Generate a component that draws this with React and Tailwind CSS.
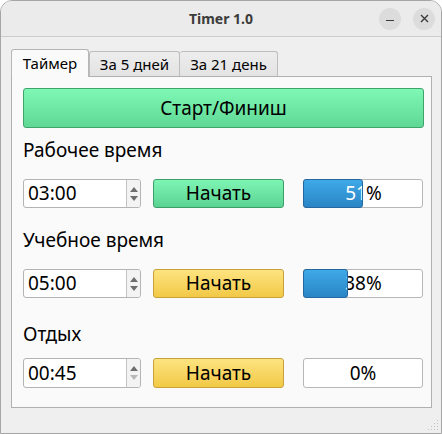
const font = { fontFamily: '"Noto Sans", "Open Sans", sans-serif' }

function SpinBox({ value, downDisabled }) {
  return (
    <div className="flex w-[118px] h-full bg-white border border-[#b4b4b4] rounded-[3px] overflow-hidden">
      <div className="flex-1 flex items-center pl-[4px] text-[19px] text-black">{value}</div>
      <div className="w-[14px] flex flex-col items-center justify-center gap-[4px] bg-[#f3f3f3] border-l border-[#c4c4c4]">
        <svg width="8" height="5" viewBox="0 0 8 5"><path d="M4 0L8 5H0Z" fill="#6e6e6e" /></svg>
        <svg width="8" height="5" viewBox="0 0 8 5"><path d="M0 0H8L4 5Z" fill={downDisabled ? "#b8b8b8" : "#6e6e6e"} /></svg>
      </div>
    </div>
  )
}

function StartButton({ color }) {
  const cls = color === "green"
    ? "bg-gradient-to-b from-[#7ff5b4] to-[#5ad392] border-[#3c9f69]"
    : "bg-gradient-to-b from-[#fde37f] to-[#f2c944] border-[#c8a13a]"
  return (
    <div className={`w-[131px] h-full flex items-center justify-center border rounded-[3px] text-[19px] text-black ${cls}`}>
      Начать
    </div>
  )
}

function Progress({ value }) {
  return (
    <div className="relative w-[120px] h-full bg-white border border-[#b7b7b7] rounded-[3px]">
      <div className="absolute inset-0 flex items-center justify-center text-[19px] text-black">{value}%</div>
      {value > 0 && (
        <div
          className="absolute left-[-1px] top-[-1px] bottom-[-1px] overflow-hidden rounded-[3px] border border-[#2567a0] bg-gradient-to-b from-[#3fa9e8] to-[#2a85c5]"
          style={{ width: `${value}%` }}
        >
          <div className="w-[120px] h-full flex items-center justify-center text-[19px] text-white">{value}%</div>
        </div>
      )}
    </div>
  )
}

function Row({ time, color, value, downDisabled, h }) {
  return (
    <div className={`flex items-stretch ${h}`}>
      <SpinBox value={time} downDisabled={downDisabled} />
      <div className="ml-[12px]"><StartButton color={color} /></div>
      <div className="ml-[19px]"><Progress value={value} /></div>
    </div>
  )
}

export default function App() {
  return (
    <div style={font} className="w-[442px] h-[434px] flex flex-col bg-[#efefef] border border-[#a6a6a6] rounded-t-[12px] overflow-hidden">
      {/* Title bar */}
      <div className="h-[36px] flex items-center bg-[#ebebeb] border-b border-[#cdcdcd] shrink-0">
        <div className="w-[62px]" />
        <div className="flex-1 text-center text-[14px] font-bold text-[#3c3c3c]">Timer 1.0</div>
        <div className="w-[62px] flex items-center justify-end gap-[12px] pr-[6px]">
          <div className="w-[22px] h-[22px] rounded-full bg-[#dcdcdc] flex items-center justify-center">
            <div className="w-[8px] h-[1.5px] bg-[#3a3a3a] mt-[4px]" />
          </div>
          <div className="w-[22px] h-[22px] rounded-full bg-[#dcdcdc] flex items-center justify-center">
            <svg width="9" height="9" viewBox="0 0 9 9"><path d="M1 1L8 8M8 1L1 8" stroke="#3a3a3a" strokeWidth="1.4" /></svg>
          </div>
        </div>
      </div>

      {/* Body */}
      <div className="flex-1 flex flex-col pl-[10px] pr-[9px] pt-[11px]">
        {/* Tabs */}
        <div className="flex items-end h-[28px] text-[15px] text-black">
          <div className="relative z-10 w-[78px] h-[28px] -mb-px flex items-center justify-center bg-[#fafafa] border border-b-0 border-[#b6b6b6] rounded-t-[3px]">
            Таймер
          </div>
          <div className="w-[91px] h-[25px] flex items-center justify-center bg-gradient-to-b from-[#ededed] to-[#e3e3e3] border border-b-0 border-[#bdbdbd] rounded-t-[3px]">
            За 5 дней
          </div>
          <div className="w-[98px] h-[25px] flex items-center justify-center bg-gradient-to-b from-[#ededed] to-[#e3e3e3] border border-l-0 border-b-0 border-[#bdbdbd] rounded-t-[3px]">
            За 21 день
          </div>
        </div>

        {/* Pane */}
        <div className="h-[332px] bg-[#fafafa] border border-[#b0b0b0] pl-[11px] pr-[7px] pt-[11px] flex flex-col">
          <div className="h-[40px] flex items-center justify-center border border-[#3ea46b] rounded-[3px] bg-gradient-to-b from-[#7ff7b5] to-[#5fd896] text-[19px] text-black">
            Старт/Финиш
          </div>

          <div className="mt-[10px] text-[19px] leading-[24px] text-black">Рабочее время</div>
          <div className="mt-[17px]">
            <Row time="03:00" color="green" value={51} h="h-[29px]" />
          </div>

          <div className="mt-[20px] text-[19px] leading-[24px] text-black">Учебное время</div>
          <div className="mt-[17px]">
            <Row time="05:00" color="yellow" value={38} h="h-[29px]" />
          </div>

          <div className="mt-[24px] text-[19px] leading-[24px] text-black">Отдых</div>
          <div className="mt-[12px]">
            <Row time="00:45" color="yellow" value={0} downDisabled h="h-[30px]" />
          </div>
        </div>

        {/* Resize grip */}
        <div className="flex-1 flex justify-end items-end pb-[1px] -mr-[8px]">
          <svg width="12" height="12" viewBox="0 0 12 12">
            <g fill="#c4c4c4">
              <rect x="9" y="0" width="1" height="1" />
              <rect x="6" y="3" width="1" height="1" /><rect x="9" y="3" width="1" height="1" />
              <rect x="3" y="6" width="1" height="1" /><rect x="6" y="6" width="1" height="1" /><rect x="9" y="6" width="1" height="1" />
              <rect x="0" y="9" width="1" height="1" /><rect x="3" y="9" width="1" height="1" /><rect x="6" y="9" width="1" height="1" />
              <rect x="9" y="9" width="1" height="1" />
            </g>
          </svg>
        </div>
      </div>
    </div>
  )
}
